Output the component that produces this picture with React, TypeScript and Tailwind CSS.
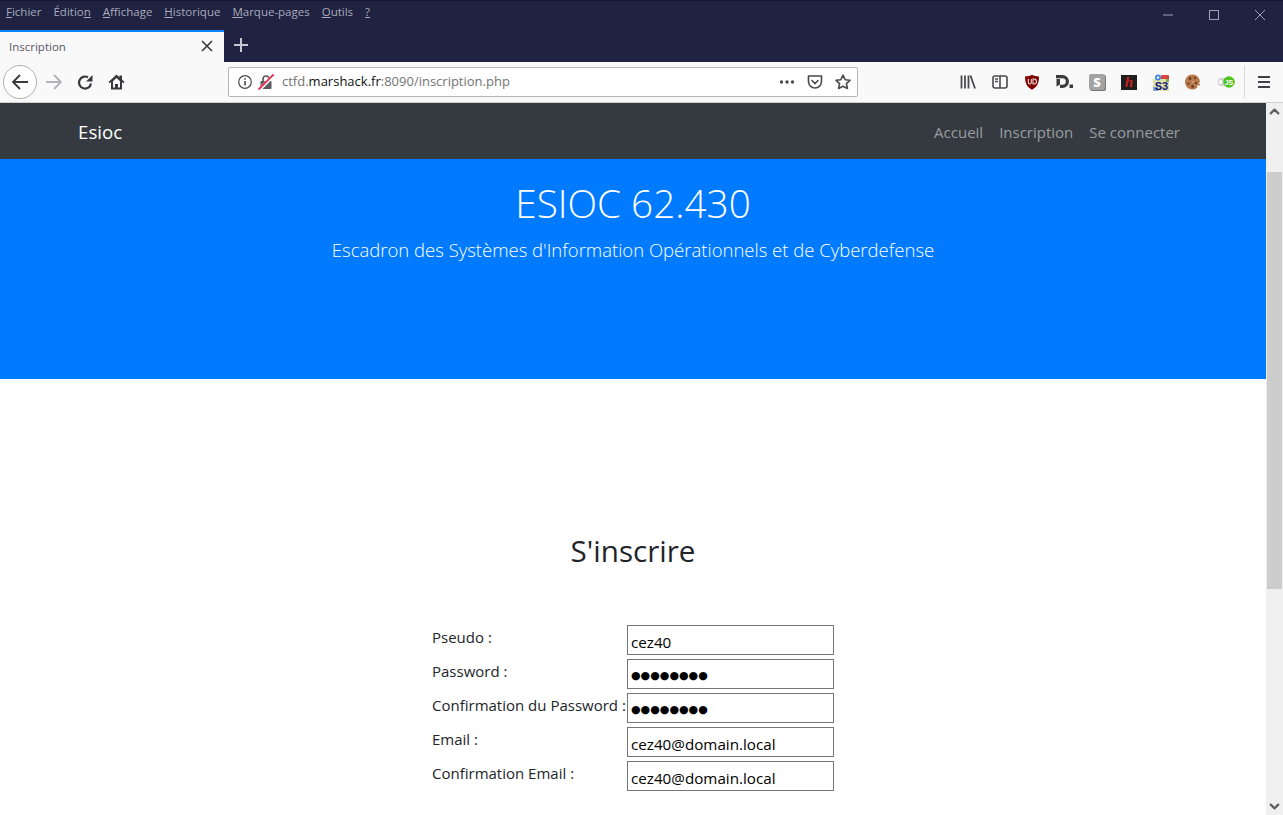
import React from 'react';
import { ChevronDown, ChevronUp } from 'lucide-react';

const ui = "font-['Open_Sans','Noto_Sans',sans-serif]";

const menus = [
  { pre: '', key: 'F', post: 'ichier' },
  { pre: 'Éditio', key: 'n', post: '' },
  { pre: '', key: 'A', post: 'ffichage' },
  { pre: '', key: 'H', post: 'istorique' },
  { pre: '', key: 'M', post: 'arque-pages' },
  { pre: '', key: 'O', post: 'utils' },
  { pre: '', key: '?', post: '' },
];

const dots = '●●●●●●●●';

const fields = [
  { label: 'Pseudo :', value: 'cez40', secret: false },
  { label: 'Password :', value: dots, secret: true },
  { label: 'Confirmation du Password :', value: dots, secret: true },
  { label: 'Email :', value: 'cez40@domain.local', secret: false },
  { label: 'Confirmation Email :', value: 'cez40@domain.local', secret: false },
];

function TitleBar() {
  return (
    <div className="h-[30px] bg-[#1f2241] border-t border-[#14162c] flex items-start justify-between">
      <div className={`flex gap-[12px] pl-[6px] pt-[3px] text-[11.5px] leading-[16px] text-[#a9abbb] ${ui}`}>
        {menus.map((m) => (
          <span key={m.key}>
            {m.pre}
            <span className="underline">{m.key}</span>
            {m.post}
          </span>
        ))}
      </div>
      <div className="flex items-center pt-[8px] pr-[17px] gap-[34px]">
        <svg width="12" height="12" viewBox="0 0 12 12" className="stroke-[#9fa1b2]" fill="none">
          <path d="M1 6h10" />
        </svg>
        <svg width="12" height="12" viewBox="0 0 12 12" className="stroke-[#9fa1b2]" fill="none">
          <rect x="1.5" y="1.5" width="9" height="9" />
        </svg>
        <svg width="12" height="12" viewBox="0 0 12 12" className="stroke-[#9fa1b2]" fill="none">
          <path d="M1 1l10 10M11 1L1 11" />
        </svg>
      </div>
    </div>
  );
}

function TabBar() {
  return (
    <div className="h-[32px] bg-[#1f2241] flex items-stretch">
      <div className="w-[224px] bg-[#f9f9fa] border-t-2 border-[#0a84ff] flex items-center justify-between pl-[9px] pr-[11px]">
        <span className={`text-[11.5px] text-[#5c5566] ${ui}`}>Inscription</span>
        <svg width="12" height="12" viewBox="0 0 12 12" fill="none" className="stroke-[#38383d] stroke-[1.6] mb-[2px]">
          <path d="M1 1l10 10M11 1L1 11" />
        </svg>
      </div>
      <div className="w-[33px] flex items-center justify-center pb-[2px]">
        <svg width="14" height="14" viewBox="0 0 14 14" fill="none" className="stroke-[#c8c9d2] stroke-2">
          <path d="M7 0v14M0 7h14" />
        </svg>
      </div>
    </div>
  );
}

function AddressBar() {
  return (
    <div className="ml-[103px] w-[630px] h-[30px] bg-white border border-[#b5b5b8] rounded-[2px] flex items-center pl-[8px] pr-[6px]">
      <svg width="16" height="16" viewBox="0 0 16 16" fill="none">
        <circle cx="8" cy="8" r="6.3" stroke="#4a4a4f" strokeWidth="1.2" />
        <path d="M8 7v4.5" stroke="#4a4a4f" strokeWidth="1.6" />
        <path d="M8 4.2v1.6" stroke="#4a4a4f" strokeWidth="1.6" />
      </svg>
      <svg width="16" height="16" viewBox="0 0 16 16" fill="none" className="ml-[5px]">
        <path d="M5 7V5a3 3 0 0 1 6 0v2" stroke="#5a5a5f" strokeWidth="1.7" />
        <rect x="2.5" y="7" width="11" height="8" rx="1" fill="#5a5a5f" />
        <path d="M1 16L16 1" stroke="#f5f5f5" strokeWidth="3.6" />
        <path d="M.5 15.500L15.500 .5" stroke="#e8274f" strokeWidth="1.8" />
      </svg>
      <span className={`ml-[8px] text-[13px] text-[#737373] ${ui}`}>
        ctfd.<span className="text-[#111]">marshack.fr</span>:8090/inscription.php
      </span>
      <div className="ml-auto flex items-center gap-[12px]">
        <svg width="16" height="16" viewBox="0 0 16 16" fill="#4a4a4f">
          <circle cx="2.5" cy="8" r="1.7" />
          <circle cx="8" cy="8" r="1.7" />
          <circle cx="13.5" cy="8" r="1.7" />
        </svg>
        <svg width="16" height="16" viewBox="0 0 16 16" fill="none" stroke="#4a4a4f" strokeWidth="1.6">
          <path d="M1.500 2h13v5.500a6.500 6.500 0 0 1-13 0z" strokeLinejoin="round" />
          <path d="M5 6.500l3 3 3-3" strokeLinecap="round" />
        </svg>
        <svg width="16" height="16" viewBox="0 0 16 16" fill="none" stroke="#4a4a4f" strokeWidth="1.6">
          <path d="M8 1.200l2.100 4.500 4.900.6-3.600 3.300 1 4.900L8 12.200l-4.400 2.300 1-4.900L1 6.300l4.900-.6z" strokeLinejoin="round" />
        </svg>
      </div>
    </div>
  );
}

function Extensions() {
  return (
    <div className="ml-auto flex items-center h-full">
      <div className="flex items-center gap-[16px] pr-[9px]">
        {/* library */}
        <svg width="16" height="16" viewBox="0 0 16 16" fill="none" stroke="#4a4a4f" strokeWidth="1.8">
          <path d="M1.500 1.500v13M5 1.500v13M8.500 1.500v13M10.500 1.500l4.500 13" />
        </svg>
        {/* sidebar */}
        <svg width="16" height="16" viewBox="0 0 16 16" fill="none" stroke="#4a4a4f" strokeWidth="1.6">
          <rect x="1" y="2" width="14" height="12" rx="2" />
          <path d="M8 2v12M3 5h3M3 7.500h3" />
        </svg>
        {/* uBlock */}
        <svg width="16" height="16" viewBox="0 0 16 16">
          <path d="M1 2.500C4 2.500 6 2 8 .8c2 1.200 4 1.700 7 1.700 0 6-1.500 10.500-7 13.200C2.500 13 1 8.500 1 2.500z" fill="#800000" />
          <path d="M4.300 5v3.500a1.500 1.500 0 0 0 3 0V5M9 5v5h1a2.500 2.500 0 0 0 0-5z" fill="none" stroke="#ecdcdc" strokeWidth="1.100" />
        </svg>
        {/* D. */}
        <svg width="17" height="16" viewBox="0 0 17 16">
          <path d="M0 1h6.500a6.500 6.500 0 0 1 0 13H4v-3.200h2.500a3.300 3.300 0 0 0 0-6.600H0z" fill="#3b3b3b" />
          <path d="M.5 5h3.500v5.500l-3.500 2z" fill="#3b3b3b" />
          <rect x="13.500" y="10.500" width="3.500" height="3.500" fill="#3b3b3b" />
        </svg>
        {/* Stylish */}
        <div className={`w-[16px] h-[16px] rounded-[2px] bg-[#a3a3a3] shadow-[1px_1px_0_#777] flex items-center justify-center text-white font-extrabold text-[13px] leading-none ${ui}`}>
          S
        </div>
        {/* h */}
        <div className="w-[16px] h-[15px] bg-[#1e1e1e] flex items-center justify-center text-[#c9201f] italic font-bold text-[15px] leading-none font-['Liberation_Serif',serif]">
          h
        </div>
        {/* S3 */}
        <svg width="16" height="17" viewBox="0 0 16 17">
          <rect x="8" y="1" width="8" height="5" rx="1" fill="#d4453c" />
          <rect x="0" y="5" width="16" height="12" fill="#dfe3a8" />
          <rect x="0" y="13" width="5" height="4" fill="#79a9d8" />
          <rect x="13" y="5" width="3" height="3" fill="#7fa85a" />
          <circle cx="5" cy="3.500" r="3" fill="#3f86dc" />
          <circle cx="5" cy="3.500" r="1.300" fill="#e8f0fa" />
          <text x="8.500" y="15.500" textAnchor="middle" fontSize="11" fontWeight="800" fill="#15157a" fontFamily="Liberation Sans, sans-serif">S3</text>
        </svg>
        {/* cookie */}
        <svg width="16" height="16" viewBox="0 0 16 16">
          <path d="M7.500 .5a7.500 7.500 0 1 0 5 13.100c-.6-.8-.6-1.600 0-2.300.9.400 2 .3 3-.4-.5-.5-1.300-.7-1.500-1.400-.1-.6.400-1.200 1-1.500C14.800 3.600 11.500.5 7.500.5z" fill="#b9784c" />
          <circle cx="5" cy="4.500" r="1.300" fill="#5c3019" />
          <circle cx="10" cy="4" r="1" fill="#5c3019" />
          <circle cx="3.500" cy="9.500" r="1" fill="#5c3019" />
          <circle cx="8" cy="8" r="1" fill="#d8a57e" />
          <circle cx="7.500" cy="12.500" r="1.300" fill="#5c3019" />
          <circle cx="11" cy="9" r="1.100" fill="#5c3019" />
        </svg>
        {/* JS toggle */}
        <svg width="18" height="12" viewBox="0 0 18 12">
          <rect x=".5" y="2" width="14" height="8" rx="4" fill="#d0d0d0" />
          <circle cx="3.500" cy="6" r="2.200" fill="#f4f4f4" />
          <circle cx="12" cy="6" r="5.800" fill="#53c41f" />
          <text x="12" y="8.500" textAnchor="middle" fontSize="7" fontWeight="700" fill="#fff" fontFamily="Liberation Sans, sans-serif">JS</text>
        </svg>
      </div>
      <div className="w-px h-[32px] bg-[#d8d8d9]" />
      <div className="w-[38px] flex justify-center">
        <svg width="14" height="14" viewBox="0 0 14 14" stroke="#3f3f44" strokeWidth="2">
          <path d="M1 2h12M1 7h12M1 12h12" />
        </svg>
      </div>
    </div>
  );
}

function Toolbar() {
  return (
    <div className="h-[41px] bg-[#f9f9fa] border-b border-[#cfcfd1] flex items-center pl-[3px]">
      <div className="w-[34px] h-[34px] rounded-full bg-white border border-[#b1b1b3] flex items-center justify-center">
        <svg width="18" height="18" viewBox="0 0 18 18" fill="none" stroke="#38383d" strokeWidth="1.800">
          <path d="M17 9H2M9 2L2 9l7 7" />
        </svg>
      </div>
      <svg width="18" height="18" viewBox="0 0 18 18" fill="none" stroke="#b3b3b5" strokeWidth="1.800" className="ml-[8px]">
        <path d="M1 9h15M9 2l7 7-7 7" />
      </svg>
      <svg width="16" height="16" viewBox="0 0 16 16" fill="none" className="ml-[14px]">
        <path d="M14 9.500A6 6 0 1 1 11 3.300" stroke="#38383d" strokeWidth="2.200" />
        <path d="M15.500 1v6.500H9z" fill="#38383d" />
      </svg>
      <svg width="17" height="16" viewBox="0 0 17 16" className="ml-[15px]">
        <path fillRule="evenodd" d="M8.500 .5L.5 8l1.200 1.200L3 8v7.500h11V8l1.300 1.200L16.500 8 14 5.600V1.500h-2.500v1.800zM5 7.300l3.500-3.300L12 7.300v6.200h-2V10H7v3.500H5z" fill="#38383d" />
      </svg>
      <AddressBar />
      <Extensions />
    </div>
  );
}

function Scrollbar() {
  return (
    <div className="w-[17px] h-full bg-[#f0f0f0] flex flex-col items-center">
      <ChevronUp size={15} strokeWidth={3.5} className="text-[#606060] mt-[1px]" />
      <div className="w-[15px] h-[417px] bg-[#cdcdcd] mt-[53px]" />
      <ChevronDown size={15} strokeWidth={3.5} className="text-[#606060] mt-auto mb-[1px]" />
    </div>
  );
}

function SignupForm() {
  return (
    <div className="w-[402px] mx-auto mt-[52px] flex flex-col gap-[4px]">
      {fields.map((f) => (
        <div key={f.label} className="flex h-[30px]">
          <label className="w-[195px] shrink-0 text-[15px] leading-[24px] text-[#212529] whitespace-nowrap">
            {f.label}
          </label>
          <input
            readOnly
            type="text"
            value={f.value}
            className={
              f.secret
                ? "w-[207px] h-[30px] border border-[#767676] px-[3px] pt-[3px] text-[11px] text-black bg-white outline-none font-['DejaVu_Sans',sans-serif]"
                : 'w-[207px] h-[30px] border border-[#767676] px-[3px] pt-[3px] text-[15.2px] text-black bg-white outline-none'
            }
          />
        </div>
      ))}
    </div>
  );
}

export default function App() {
  return (
    <div className={`h-[815px] w-[1283px] overflow-hidden flex flex-col bg-white ${ui}`}>
      <TitleBar />
      <TabBar />
      <Toolbar />
      <div className="flex-1 flex min-h-0">
        <div className="flex-1 min-w-0">
          <nav className="h-[56px] bg-[#343a40] flex items-center justify-between pl-[78px] pr-[86px] pt-[2px]">
            <span className="text-[18.7px] text-white">Esioc</span>
            <div className="flex gap-4 text-[15px] text-[#9a9da0]">
              <span>Accueil</span>
              <span>Inscription</span>
              <span>Se connecter</span>
            </div>
          </nav>
          <header className="h-[220px] bg-[#007bff] text-white text-center font-light">
            <h1 className="text-[38.7px] leading-[48px] pt-[20px]">ESIOC 62.430</h1>
            <p className="text-[18.5px] leading-[30px] mt-[8px]">
              Escadron des Systèmes d'Information Opérationnels et de Cyberdefense
            </p>
          </header>
          <section className="pt-[150px]">
            <h2 className="text-[29.6px] leading-[44px] text-center text-[#212529]">S'inscrire</h2>
            <SignupForm />
          </section>
        </div>
        <Scrollbar />
      </div>
    </div>
  );
}
